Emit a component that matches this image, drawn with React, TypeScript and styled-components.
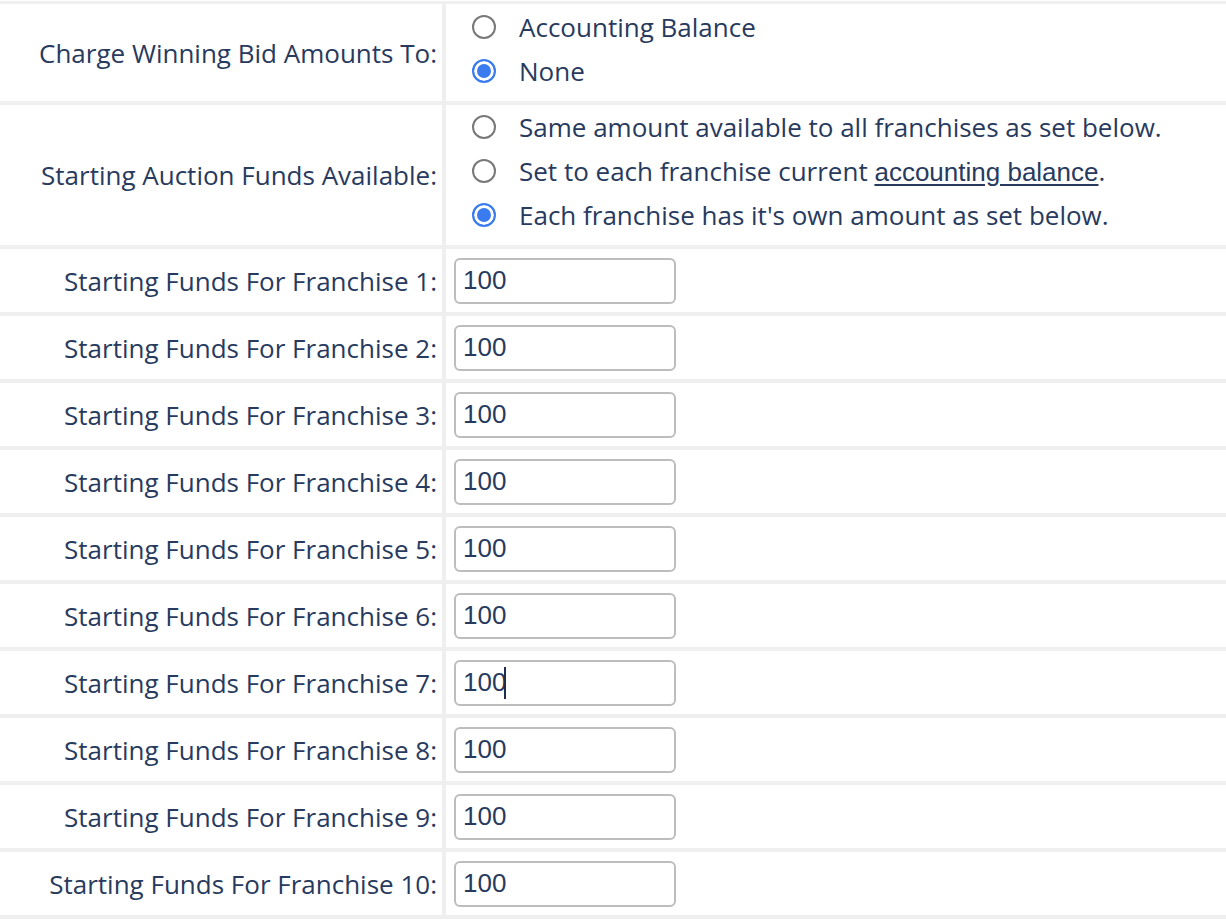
import React from "react";
import styled, { createGlobalStyle } from "styled-components";

const Global = createGlobalStyle`
  html, body { margin: 0; padding: 0; background: #ffffff; }
  body { font-family: "Open Sans", "Noto Sans", sans-serif; color: #283a5e; }
`;

const Page = styled.div`
  padding-top: 1px;
  width: 1226px;
  overflow: hidden;
`;

const FormGrid = styled.div`
  display: grid;
  grid-template-columns: 442px 1fr;
  column-gap: 4px;
  row-gap: 4px;
  background: #efefef;
  padding: 3px 0 4px 0;
`;

const LabelCell = styled.div<{ $h: number }>`
  background: #ffffff;
  min-height: ${(p) => p.$h}px;
  display: flex;
  align-items: center;
  justify-content: flex-end;
  padding-right: 5px;
  font-size: 26px;
  color: #283a5e;
  white-space: nowrap;
`;

const ValueCell = styled.div<{ $h: number }>`
  background: #ffffff;
  min-height: ${(p) => p.$h}px;
  display: flex;
  flex-direction: column;
  justify-content: center;
  padding-left: 8px;
`;

const RadioList = styled.div`
  display: flex;
  flex-direction: column;
  padding: 0 0 8px 18px;
`;

const RadioRow = styled.label`
  display: flex;
  align-items: center;
  gap: 23px;
  height: 44px;
  font-size: 26px;
  color: #283a5e;
  white-space: nowrap;
`;

const RadioDot = styled.span<{ $checked?: boolean }>`
  box-sizing: border-box;
  width: 24px;
  height: 24px;
  border-radius: 50%;
  flex: none;
  border: 2px solid ${(p) => (p.$checked ? "#3a7bf0" : "#787878")};
  background: ${(p) => (p.$checked ? "#3a7bf0" : "#ffffff")};
  box-shadow: ${(p) => (p.$checked ? "inset 0 0 0 3px #ffffff" : "none")};
`;

const Link = styled.a`
  font-family: "Liberation Sans", Arial, sans-serif;
  color: #283a5e;
  text-decoration: underline;
  text-underline-offset: 3px;
`;

const Field = styled.div`
  box-sizing: border-box;
  width: 222px;
  height: 46px;
  border: 2px solid #bdbdbd;
  border-radius: 6px;
  display: flex;
  align-items: center;
  padding-left: 7px;
  font-family: "Liberation Sans", Arial, sans-serif;
  font-size: 26px;
  color: #283a5e;
`;

const Caret = styled.span`
  display: inline-block;
  width: 2px;
  height: 32px;
  background: #1f2d4f;
  margin-left: -2px;
`;

type Opt = { text: React.ReactNode; checked?: boolean };

const chargeOpts: Opt[] = [
  { text: "Accounting Balance" },
  { text: "None", checked: true },
];

const fundOpts: Opt[] = [
  { text: "Same amount available to all franchises as set below." },
  {
    text: (
      <>
        Set to each franchise current <Link>accounting balance</Link>.
      </>
    ),
  },
  { text: "Each franchise has it's own amount as set below.", checked: true },
];

const Radios = ({ opts }: { opts: Opt[] }) => (
  <RadioList role="radiogroup">
    {opts.map((o, i) => (
      <RadioRow key={i}>
        <RadioDot $checked={o.checked} />
        <span>{o.text}</span>
      </RadioRow>
    ))}
  </RadioList>
);

export default function App() {
  const franchises = Array.from({ length: 10 }, (_, i) => i + 1);
  return (
    <Page>
      <Global />
      <FormGrid>
        <LabelCell $h={97}>Charge Winning Bid Amounts To:</LabelCell>
        <ValueCell $h={97}>
          <Radios opts={chargeOpts} />
        </ValueCell>
        <LabelCell $h={140}>Starting Auction Funds Available:</LabelCell>
        <ValueCell $h={140}>
          <Radios opts={fundOpts} />
        </ValueCell>
        {franchises.map((n) => (
          <React.Fragment key={n}>
            <LabelCell $h={63}>Starting Funds For Franchise {n}:</LabelCell>
            <ValueCell $h={63}>
              <Field role="textbox">
                100
                {n === 7 && <Caret />}
              </Field>
            </ValueCell>
          </React.Fragment>
        ))}
      </FormGrid>
    </Page>
  );
}
